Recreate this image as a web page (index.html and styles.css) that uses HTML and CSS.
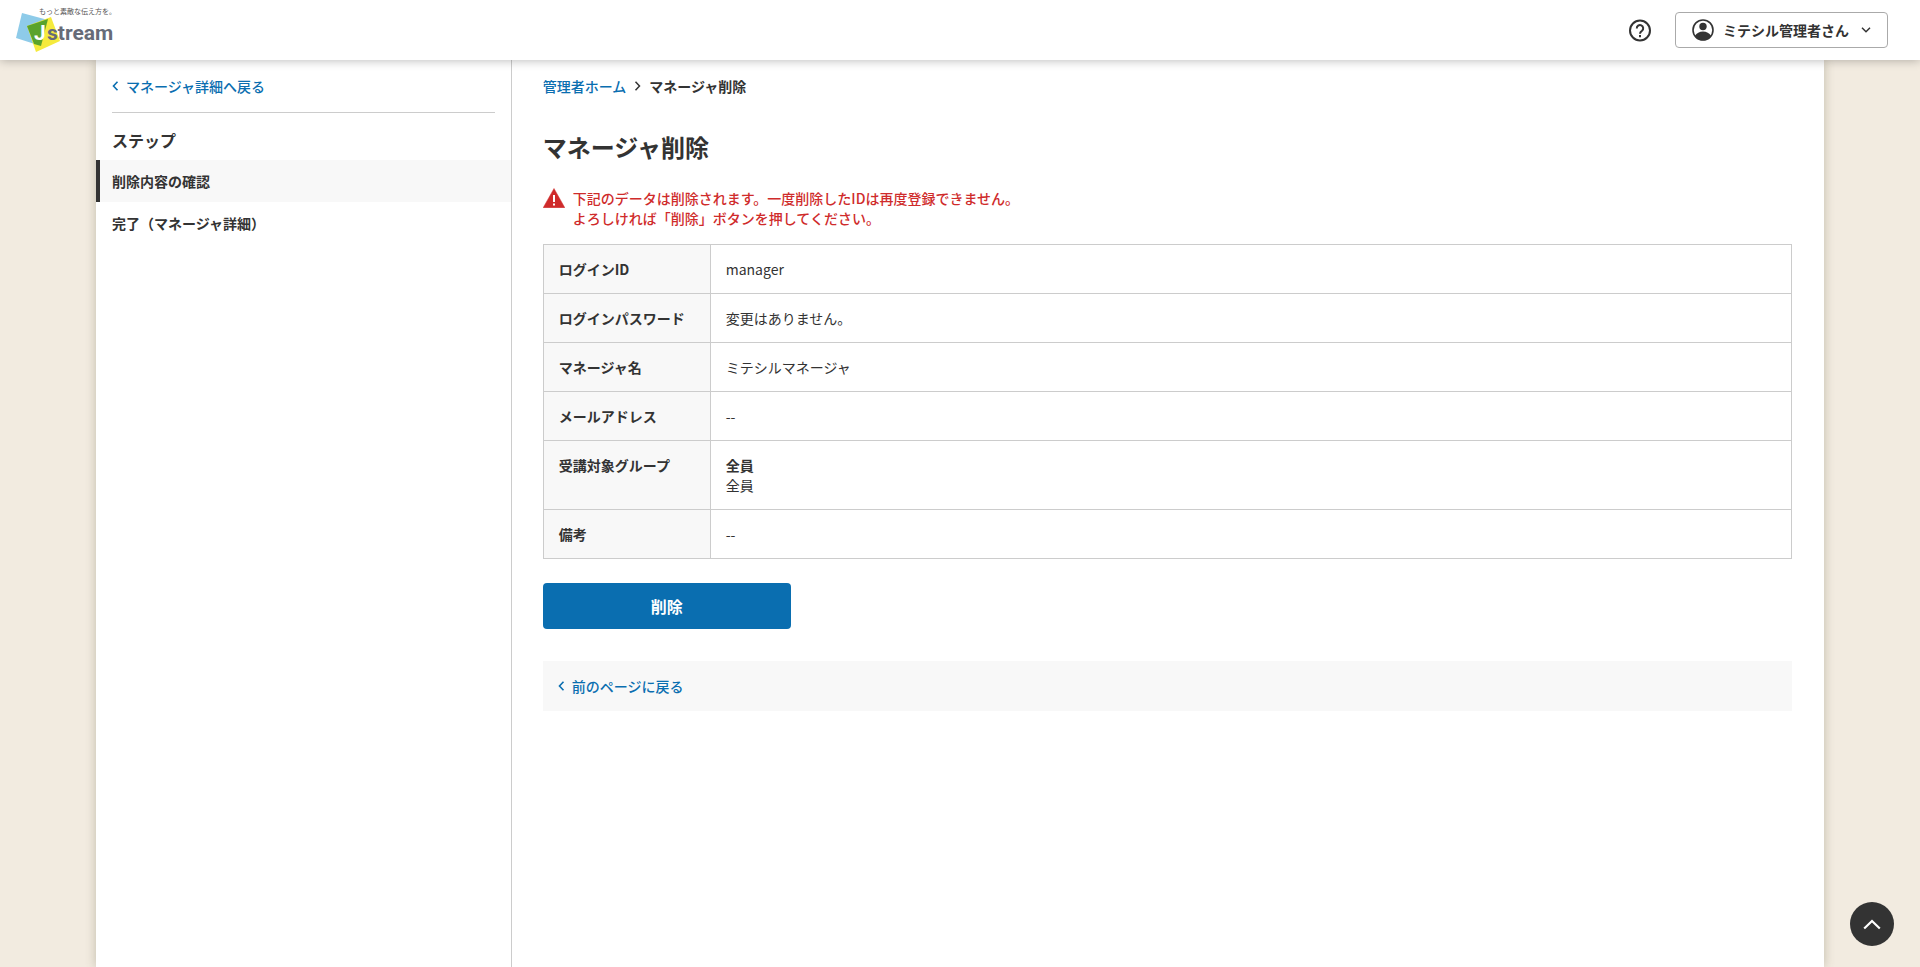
FILE: index.html
```html
<!DOCTYPE html>
<html lang="ja">
<head>
    <meta charset="UTF-8">
    <meta name="viewport" content="width=device-width, initial-scale=1.0">
    <title>マネージャ削除</title>
    <link rel="stylesheet" href="styles.css">
</head>
<body>
    <header class="header">
        <a class="logo" href="#">
            <svg width="104" height="50" viewBox="0 0 104 50">
                <polygon points="6,8 32,15 25,41 0,33" fill="#8ecbe9"/>
                <polygon points="35,12 44,36 20,47 11,21" fill="#f5ea3c"/>
                <polygon points="11,21 32,14 25,41 18,39" fill="#5aa32c"/>
                <text class="logo-copy" x="23" y="9">もっと素敵な伝え方を。</text>
                <text class="logo-j" x="18" y="35">J</text>
                <text class="logo-name" x="31" y="35">stream</text>
            </svg>
        </a>
        <div class="header-menu">
            <a class="help" href="#">
                <svg width="24" height="24" viewBox="0 0 24 24" fill="none" stroke="#333" stroke-width="2">
                    <circle cx="12" cy="12.500" r="10"/>
                    <path d="M8.800 10.500a3.200 3.200 0 1 1 5.200 2.300c-1.200 .9-2 1.500-2 3"/>
                    <path d="M12 17v2.200"/>
                </svg>
            </a>
            <button class="user" type="button">
                <svg width="24" height="24" viewBox="0 0 24 24">
                    <circle cx="12" cy="12" r="10" fill="none" stroke="#333" stroke-width="1.600"/>
                    <circle cx="12" cy="8.500" r="3.700" fill="#333"/>
                    <path d="M4 18c1.500-3 4.500-4.500 8-4.500s6.500 1.500 8 4.500c-2 2.800-5 4.200-8 4.200s-6-1.400-8-4.200z" fill="#333"/>
                </svg>
                <span>ミテシル管理者さん</span>
                <svg class="user-arrow" width="10" height="6" viewBox="0 0 10 6" fill="none" stroke="#333" stroke-width="1.500">
                    <path d="M1 .8l4 4 4-4"/>
                </svg>
            </button>
        </div>
    </header>

    <div class="container">
        <nav class="side">
            <div class="side-back">
                <a class="link" href="#">
                    <svg width="7" height="10" viewBox="0 0 7 10" fill="none" stroke="currentColor" stroke-width="1.600"><path d="M5.500 .8l-4 4.200 4 4.200"/></svg>
                    マネージャ詳細へ戻る
                </a>
            </div>
            <h2 class="side-title">ステップ</h2>
            <ol class="steps">
                <li class="step current">削除内容の確認</li>
                <li class="step">完了（マネージャ詳細）</li>
            </ol>
        </nav>

        <main class="main">
            <div class="breadcrumb">
                <a class="link" href="#">管理者ホーム</a>
                <svg width="7" height="10" viewBox="0 0 7 10" fill="none" stroke="#333" stroke-width="1.500"><path d="M1.500 .8l4 4.200-4 4.200"/></svg>
                <strong>マネージャ削除</strong>
            </div>
            <h1 class="title">マネージャ削除</h1>

            <div class="alert">
                <svg width="22" height="20" viewBox="0 0 22 20">
                    <path d="M11 .5L21.800 19.700H.2z" fill="#cf2b2b" stroke="#cf2b2b" stroke-width=".5" stroke-linejoin="round"/>
                    <path d="M10 7h2v7h-2zM10 15.500h2v2h-2z" fill="#fff"/>
                </svg>
                <p>下記のデータは削除されます。一度削除したIDは再度登録できません。<br>よろしければ「削除」ボタンを押してください。</p>
            </div>

            <table class="detail">
                <tr>
                    <th scope="row">ログインID</th>
                    <td>manager</td>
                </tr>
                <tr>
                    <th scope="row">ログインパスワード</th>
                    <td>変更はありません。</td>
                </tr>
                <tr>
                    <th scope="row">マネージャ名</th>
                    <td>ミテシルマネージャ</td>
                </tr>
                <tr>
                    <th scope="row">メールアドレス</th>
                    <td>--</td>
                </tr>
                <tr>
                    <th scope="row">受講対象グループ</th>
                    <td><strong>全員</strong><br>全員</td>
                </tr>
                <tr>
                    <th scope="row">備考</th>
                    <td>--</td>
                </tr>
            </table>

            <button class="button" type="submit">削除</button>

            <div class="back">
                <a class="link" href="#">
                    <svg width="7" height="10" viewBox="0 0 7 10" fill="none" stroke="currentColor" stroke-width="1.600"><path d="M5.500 .8l-4 4.200 4 4.200"/></svg>
                    前のページに戻る
                </a>
            </div>
        </main>
    </div>

    <a class="pagetop" href="#">
        <svg width="18" height="11" viewBox="0 0 18 11" fill="none" stroke="#fff" stroke-width="2.200"><path d="M1.200 9.500L9 2l7.800 7.500"/></svg>
    </a>
</body>
</html>
```
FILE: styles.css
```css
*{
    margin: 0;
    padding: 0;
    box-sizing: border-box;
}
body{
    background-color: #f2ebe0;
    color: #333;
    font-family: "Noto Sans CJK JP", sans-serif;
    font-size: 14px;
    line-height: 20px;
}
svg{
    display: block;
    flex-shrink: 0;
}
.header{
    position: sticky;
    top: 0;
    z-index: 10;
    display: flex;
    align-items: center;
    justify-content: space-between;
    height: 60px;
    padding: 0 32px 0 16px;
    background-color: #fff;
    box-shadow: 0 0 10px rgba(0, 0, 0, 0.3);
}
.logo-copy{
    font-size: 7px;
    fill: #555;
}
.logo-j, .logo-name{
    font-family: Roboto, sans-serif;
    font-size: 21px;
    font-weight: bold;
    fill: #666b78;
}
.logo-j{
    fill: #fff;
}
.header-menu{
    display: flex;
    align-items: center;
    gap: 23px;
}
.user{
    display: flex;
    align-items: center;
    gap: 8px;
    height: 36px;
    padding: 0 16px 0 15px;
    background-color: #fff;
    border: 1px solid #aaa;
    border-radius: 4px;
    color: #333;
    font: inherit;
    font-weight: bold;
    cursor: pointer;
}
.user-arrow{
    margin-left: 4px;
}
.container{
    display: flex;
    width: 90%;
    min-height: calc(100vh - 60px);
    margin: 0 auto;
    background-color: #fff;
    box-shadow: 0 0 10px rgba(80, 80, 50, 0.3);
}
.side{
    width: 24%;
    box-shadow: 1px 0 0 #ccc;
}
.side-back{
    margin: 0 16px;
    padding: 16px 0;
    border-bottom: 1px solid #ccc;
}
.link{
    display: inline-flex;
    align-items: center;
    gap: 7px;
    color: #0a6eb0;
    font-weight: 500;
    text-decoration: none;
    vertical-align: top;
}
.link:hover{
    text-decoration: underline;
}
.side-title{
    padding: 15px 16px 8px;
    font-size: 16px;
    line-height: 24px;
}
.steps{
    list-style: none;
}
.step{
    padding: 11px 12px;
    border-left: 4px solid transparent;
    font-weight: bold;
}
.current{
    background-color: #f8f8f8;
    border-left-color: #333;
}
.main{
    flex: 1;
    padding: 16px 32px;
}
.breadcrumb{
    display: flex;
    align-items: center;
    gap: 8px;
}
.title{
    margin: 33px 0 23px;
    font-size: 24px;
    line-height: 36px;
}
.alert{
    display: flex;
    gap: 8px;
    margin-bottom: 16px;
    color: #cf2b2b;
    font-weight: 500;
}
.detail{
    width: 100%;
    border-collapse: collapse;
}
.detail th, .detail td{
    padding: 14px 15px;
    border: 1px solid #ccc;
    text-align: left;
    vertical-align: top;
}
.detail th{
    width: 167px;
    background-color: #f8f8f8;
}
.button{
    display: block;
    width: 248px;
    height: 46px;
    margin: 24px 0 32px;
    background-color: #0a6eb0;
    border: none;
    border-radius: 4px;
    color: #fff;
    font: inherit;
    font-size: 16px;
    font-weight: bold;
    cursor: pointer;
}
.back{
    padding: 15px;
    background-color: #f8f8f8;
}
.pagetop{
    position: fixed;
    right: 26px;
    bottom: 21px;
    display: flex;
    align-items: center;
    justify-content: center;
    width: 44px;
    height: 44px;
    background-color: #333;
    border-radius: 50%;
}
```
